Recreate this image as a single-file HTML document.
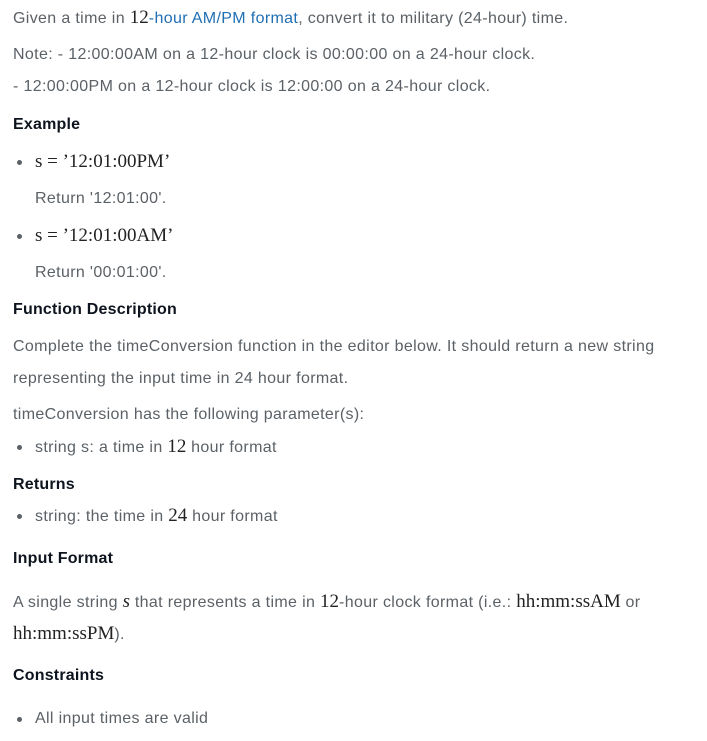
<!DOCTYPE html>
<html><head><meta charset="utf-8"><style>
body{margin:0;width:707px;height:741px;background:#fff;position:relative;overflow:hidden;font-family:"Liberation Sans",sans-serif;font-size:16px;letter-spacing:0.35px;color:#5b6166}
.l{position:absolute;left:13px;line-height:20px;white-space:nowrap}
.h{color:#0e141e;font-weight:bold;font-size:16px;letter-spacing:0.2px}
.m{font-family:"Liberation Serif",serif;font-size:19px;color:#222;letter-spacing:0}
.i{left:35px}
.b{position:absolute;left:17px;width:5px;height:5px;border-radius:50%;background:#5b6166}
a{color:#1f6fb5;text-decoration:none}
</style></head><body>
<div class="l" style="top:8px">Given a time in <span class="m">12</span><a>-hour AM/PM format</a>, convert it to military (24-hour) time.</div>
<div class="l" style="top:45px">Note: - 12:00:00AM on a 12-hour clock is 00:00:00 on a 24-hour clock.</div>
<div class="l" style="top:77px">- 12:00:00PM on a 12-hour clock is 12:00:00 on a 24-hour clock.</div>
<div class="l h" style="top:115px">Example</div>
<div class="b" style="top:160px"></div>
<div class="l i m" style="top:152px">s = ’12:01:00PM’</div>
<div class="l i" style="top:189px">Return '12:01:00'.</div>
<div class="b" style="top:234px"></div>
<div class="l i m" style="top:226px">s = ’12:01:00AM’</div>
<div class="l i" style="top:263px">Return '00:01:00'.</div>
<div class="l h" style="top:300px">Function Description</div>
<div class="l" style="top:337px">Complete the timeConversion function in the editor below. It should return a new string</div>
<div class="l" style="top:369px">representing the input time in 24 hour format.</div>
<div class="l" style="top:405px">timeConversion has the following parameter(s):</div>
<div class="b" style="top:445px"></div>
<div class="l i" style="top:437px">string s: a time in <span class="m">12</span> hour format</div>
<div class="l h" style="top:475px">Returns</div>
<div class="b" style="top:514px"></div>
<div class="l i" style="top:506px">string: the time in <span class="m">24</span> hour format</div>
<div class="l h" style="top:549px">Input Format</div>
<div class="l" style="top:592px">A single string <span class="m"><i>s</i></span> that represents a time in <span class="m">12</span>-hour clock format (i.e.: <span class="m">hh:mm:ssAM</span> or</div>
<div class="l" style="top:624px"><span class="m">hh:mm:ssPM</span>).</div>
<div class="l h" style="top:666px">Constraints</div>
<div class="b" style="top:717px"></div>
<div class="l i" style="top:709px">All input times are valid</div>
</body></html>
